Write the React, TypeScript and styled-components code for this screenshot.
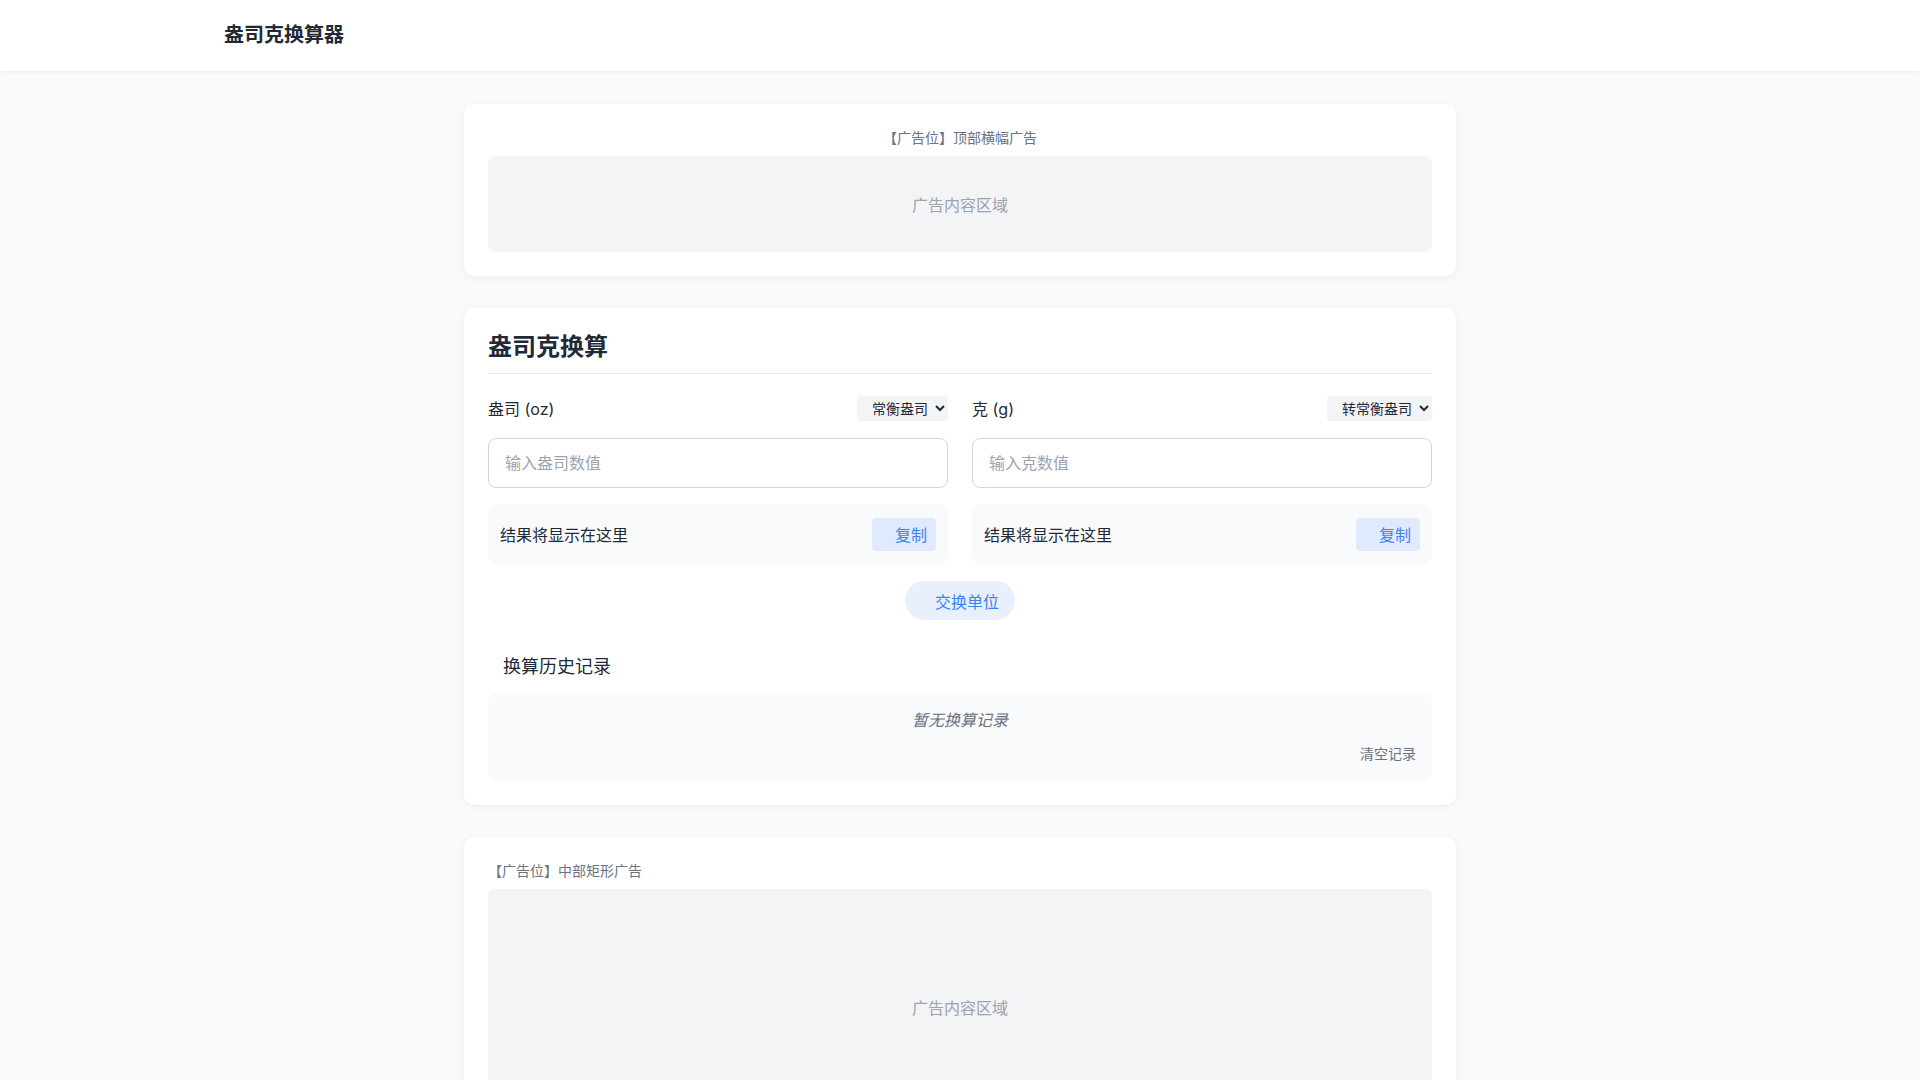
import React from "react";
import styled, { createGlobalStyle } from "styled-components";

const GlobalStyle = createGlobalStyle`
  * { box-sizing: border-box; }
  html, body { margin: 0; padding: 0; }
  body {
    background: #f9fafb;
    font-family: "Inter", "Noto Sans CJK SC", "Noto Sans", sans-serif;
    color: #1f2937;
  }
`;

const Header = styled.header`
  height: 71px;
  background: #fff;
  box-shadow: 0 1px 3px rgba(0, 0, 0, 0.06);
  display: flex;
  align-items: center;
  padding-bottom: 1px;
`;

const HeaderInner = styled.div`
  width: 100%;
  max-width: 1472px;
  margin: 0 auto;
`;

const Logo = styled.h1`
  margin: 0;
  font-size: 20px;
  line-height: 28px;
  font-weight: 700;
  color: #1f2937;
`;

const Main = styled.main`
  max-width: 992px;
  margin: 0 auto;
  padding: 33px 0;
  display: flex;
  flex-direction: column;
  gap: 32px;
`;

const Card = styled.section`
  background: #fff;
  border-radius: 10px;
  box-shadow: 0 2px 8px rgba(0, 0, 0, 0.05);
  padding: 24px;
`;

const AdLabel = styled.div<{ $align: "center" | "left" }>`
  font-size: 14px;
  line-height: 20px;
  color: #6b7280;
  text-align: ${(p) => p.$align};
  margin-bottom: 8px;
`;

const AdBox = styled.div<{ $h: number }>`
  height: ${(p) => p.$h}px;
  background: #f3f4f6;
  border-radius: 6px;
  display: flex;
  align-items: center;
  justify-content: center;
  font-size: 16px;
  color: #9ca3af;
`;

const Title = styled.h2`
  margin: 0 0 21px;
  font-size: 24px;
  line-height: 30px;
  font-weight: 700;
  color: #1f2937;
  padding-bottom: 11px;
  border-bottom: 1px solid #e5e7eb;
`;

const Columns = styled.div`
  display: grid;
  grid-template-columns: 1fr 1fr;
  gap: 24px;
`;

const Column = styled.div`
  display: flex;
  flex-direction: column;
`;

const LabelRow = styled.div`
  display: flex;
  align-items: center;
  justify-content: space-between;
  height: 26px;
  margin-bottom: 17px;
`;

const Label = styled.label`
  font-size: 16px;
  color: #1f2937;
`;

const Select = styled.select`
  height: 25px;
  border: none;
  border-radius: 4px;
  background: #f3f4f6;
  font-family: inherit;
  font-size: 14px;
  color: #1f2937;
  padding: 0 4px 0 11px;
`;

const Input = styled.input`
  height: 50px;
  width: 100%;
  border: 1px solid #d1d5db;
  border-radius: 8px;
  padding: 12px 16px;
  font-family: inherit;
  font-size: 16px;
  color: #1f2937;
  outline: none;
  &::placeholder { color: #9ca3af; }
`;

const Result = styled.div`
  margin-top: 16px;
  height: 60px;
  background: #f9fafb;
  border-radius: 8px;
  padding: 0 12px;
  display: flex;
  align-items: center;
  justify-content: space-between;
  font-size: 16px;
  color: #1f2937;
`;

const CopyButton = styled.button`
  height: 33px;
  width: 64px;
  border: none;
  border-radius: 4px;
  background: #e0eafc;
  color: #3b82f6;
  font-family: inherit;
  font-size: 16px;
  text-align: right;
  padding: 0 9px 0 0;
`;

const SwapRow = styled.div`
  display: flex;
  justify-content: center;
  margin-top: 17px;
`;

const SwapButton = styled.button`
  height: 39px;
  width: 110px;
  border: none;
  border-radius: 20px;
  background: #e8effd;
  color: #3b82f6;
  font-family: inherit;
  font-size: 16px;
  text-align: right;
  padding: 0 16px 0 0;
`;

const HistoryTitle = styled.h3`
  margin: 34px 0 13px 15px;
  font-size: 18px;
  line-height: 26px;
  font-weight: 400;
  color: #1f2937;
`;

const HistoryBox = styled.div`
  background: #f9fafb;
  border-radius: 8px;
  padding: 15px 16px 17px;
  display: flex;
  flex-direction: column;
`;

const Empty = styled.div`
  text-align: center;
  font-style: italic;
  font-size: 16px;
  line-height: 24px;
  color: #6b7280;
`;

const ClearLink = styled.button`
  align-self: flex-end;
  margin-top: 12px;
  border: none;
  background: none;
  padding: 0;
  font-family: inherit;
  font-size: 14px;
  line-height: 20px;
  color: #6b7280;
`;

export default function App() {
  return (
    <>
      <GlobalStyle />
      <Header>
        <HeaderInner>
          <Logo>盎司克换算器</Logo>
        </HeaderInner>
      </Header>
      <Main>
        <Card>
          <AdLabel $align="center">【广告位】顶部横幅广告</AdLabel>
          <AdBox $h={96}>广告内容区域</AdBox>
        </Card>
        <Card>
          <Title>盎司克换算</Title>
          <Columns>
            <Column>
              <LabelRow>
                <Label>盎司 (oz)</Label>
                <Select defaultValue="a">
                  <option value="a">常衡盎司</option>
                  <option value="b">金衡盎司</option>
                </Select>
              </LabelRow>
              <Input placeholder="输入盎司数值" />
              <Result>
                <span>结果将显示在这里</span>
                <CopyButton>复制</CopyButton>
              </Result>
            </Column>
            <Column>
              <LabelRow>
                <Label>克 (g)</Label>
                <Select defaultValue="a">
                  <option value="a">转常衡盎司</option>
                  <option value="b">转金衡盎司</option>
                </Select>
              </LabelRow>
              <Input placeholder="输入克数值" />
              <Result>
                <span>结果将显示在这里</span>
                <CopyButton>复制</CopyButton>
              </Result>
            </Column>
          </Columns>
          <SwapRow>
            <SwapButton>交换单位</SwapButton>
          </SwapRow>
          <HistoryTitle>换算历史记录</HistoryTitle>
          <HistoryBox>
            <Empty>暂无换算记录</Empty>
            <ClearLink>清空记录</ClearLink>
          </HistoryBox>
        </Card>
        <Card>
          <AdLabel $align="left">【广告位】中部矩形广告</AdLabel>
          <AdBox $h={236}>广告内容区域</AdBox>
        </Card>
      </Main>
    </>
  );
}
